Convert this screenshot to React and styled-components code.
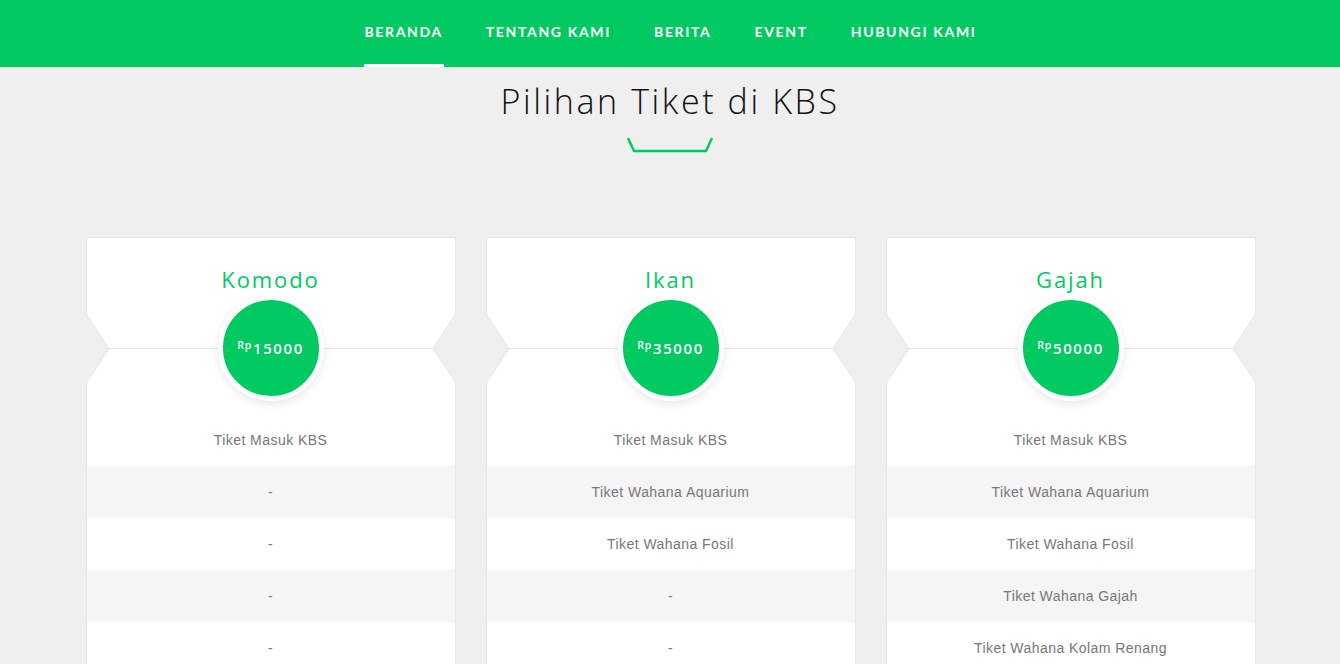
import React from 'react';
import styled, { createGlobalStyle } from 'styled-components';

const GREEN = '#00c962';

const GlobalStyle = createGlobalStyle`
  body {
    margin: 0;
    background: #efefef;
    font-family: "Liberation Sans", Arial, sans-serif;
  }
`;

const NavBar = styled.nav`
  height: 67px;
  background: ${GREEN};
  display: flex;
  justify-content: center;
`;

const NavItem = styled.a`
  position: relative;
  display: flex;
  align-items: center;
  padding: 0 21px 4px 22px;
  height: 100%;
  color: #fff;
  font-family: Lato, sans-serif;
  font-weight: 700;
  font-size: 14px;
  letter-spacing: 1.65px;
  text-transform: uppercase;
  text-decoration: none;
  box-sizing: border-box;
  &::after {
    content: '';
    display: ${(p) => (p.$active ? 'block' : 'none')};
    position: absolute;
    left: 22px;
    right: 20px;
    bottom: 0;
    height: 3px;
    background: #fff;
  }
`;

const Section = styled.section`
  display: flex;
  flex-direction: column;
  align-items: center;
`;

const Heading = styled.h2`
  margin: 12px 0 0;
  font-family: "Open Sans", sans-serif;
  font-weight: 300;
  font-size: 34px;
  letter-spacing: 2.6px;
  color: #111;
  line-height: 44px;
`;

const Divider = styled.svg`
  display: block;
  margin-top: 14px;
`;

const Grid = styled.div`
  display: grid;
  grid-template-columns: repeat(3, 370px);
  gap: 30px;
  margin-top: 84px;
  padding-left: 1px;
`;

const Card = styled.div`
  position: relative;
  background: #fff;
  border: 1px solid #e6e6e6;
  border-bottom: none;
`;

const Header = styled.div`
  position: relative;
  height: 110px;
  border-bottom: 1px solid #e6e6e6;
  display: flex;
  justify-content: center;
`;

const Name = styled.h3`
  margin: 27px 0 0;
  font-family: "Open Sans", sans-serif;
  font-weight: 400;
  font-size: 22px;
  letter-spacing: 1.9px;
  color: ${GREEN};
  line-height: 28px;
`;

const Notch = styled.svg`
  position: absolute;
  top: 76px;
  ${(p) => (p.$side === 'left' ? 'left: -1px;' : 'right: -1px; transform: scaleX(-1);')}
`;

const Price = styled.div`
  position: absolute;
  left: 50%;
  top: 110px;
  width: 96px;
  height: 96px;
  margin: -53px 0 0 -53px;
  border: 5px solid #fff;
  border-radius: 50%;
  background: ${GREEN};
  box-shadow: 0 3px 9px rgba(0, 0, 0, 0.09);
  display: flex;
  align-items: center;
  justify-content: center;
  color: #fff;
  font-family: "Open Sans", sans-serif;
  font-weight: 600;
  font-size: 15px;
  letter-spacing: 1.6px;
`;

const Currency = styled.sup`
  font-size: 10.5px;
  letter-spacing: 0.8px;
  margin-right: 1px;
  position: relative;
  top: -3px;
`;

const Rows = styled.ul`
  list-style: none;
  margin: 0;
  padding: 65px 0 0;
`;

const Row = styled.li`
  height: 52px;
  display: flex;
  align-items: center;
  justify-content: center;
  font-size: 14px;
  letter-spacing: 0.45px;
  color: #777;
  background: ${(p) => (p.$alt ? '#f5f5f5' : '#fff')};
`;

const nav = ['Beranda', 'Tentang Kami', 'Berita', 'Event', 'Hubungi Kami'];

const tickets = [
  { name: 'Komodo', price: '15000', items: ['Tiket Masuk KBS', '-', '-', '-', '-'] },
  {
    name: 'Ikan',
    price: '35000',
    items: ['Tiket Masuk KBS', 'Tiket Wahana Aquarium', 'Tiket Wahana Fosil', '-', '-'],
  },
  {
    name: 'Gajah',
    price: '50000',
    items: [
      'Tiket Masuk KBS',
      'Tiket Wahana Aquarium',
      'Tiket Wahana Fosil',
      'Tiket Wahana Gajah',
      'Tiket Wahana Kolam Renang',
    ],
  },
];

function SideNotch({ side }) {
  return (
    <Notch $side={side} width="24" height="70" viewBox="0 0 24 70">
      <polygon points="0,0 23,34 23,35 0,69" fill="#efefef" />
      <polyline points="0.5,0 23,34.5 0.5,69" fill="none" stroke="#e6e6e6" strokeWidth="1" />
    </Notch>
  );
}

export default function App() {
  return (
    <>
      <GlobalStyle />
      <NavBar>
        {nav.map((n, i) => (
          <NavItem key={n} href="#" $active={i === 0}>
            {n}
          </NavItem>
        ))}
      </NavBar>
      <Section>
        <Heading>Pilihan Tiket di KBS</Heading>
        <Divider width="86" height="16" viewBox="0 0 86 16">
          <polyline points="1,1 7,14 79,14 85,1" fill="none" stroke={GREEN} strokeWidth="2.5" />
        </Divider>
        <Grid>
          {tickets.map((t) => (
            <Card key={t.name}>
              <Header>
                <Name>{t.name}</Name>
                <SideNotch side="left" />
                <SideNotch side="right" />
                <Price>
                  <Currency>Rp</Currency>
                  {t.price}
                </Price>
              </Header>
              <Rows>
                {t.items.map((it, i) => (
                  <Row key={i} $alt={i % 2 === 1}>
                    {it}
                  </Row>
                ))}
              </Rows>
            </Card>
          ))}
        </Grid>
      </Section>
    </>
  );
}
